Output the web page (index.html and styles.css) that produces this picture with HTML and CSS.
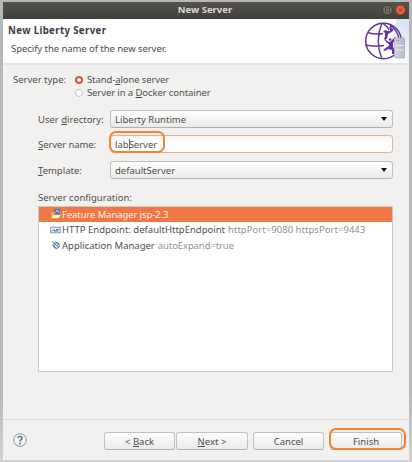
FILE: index.html
```html
<!DOCTYPE html>
<html lang="en">
<head>
<meta charset="utf-8">
<title>New Server</title>
<link rel="stylesheet" href="styles.css">
</head>
<body>
<div class="window">
  <div class="titlebar">
    <span class="title">New Server</span>
    <svg class="controls" width="26" height="16" viewBox="0 0 26 16">
      <circle cx="7.500" cy="8" r="4.800" fill="#77736a" stroke="#393832" stroke-width=".8"/>
      <rect x="5.500" y="6" width="4" height="4" fill="none" stroke="#45433e" stroke-width=".9"/>
      <circle cx="20.500" cy="8" r="5" fill="#ed6037" stroke="#3c2b22" stroke-width=".6"/>
      <path d="M19 6.500l3 3M22 6.500l-3 3" stroke="#8a3c22" stroke-width="1"/>
    </svg>
  </div>
  <header class="banner">
    <div class="heading">
      <h1>New Liberty Server</h1>
      <p>Specify the name of the new server.</p>
    </div>
    <svg class="logo" width="50" height="44" viewBox="0 0 50 44">
      <defs><linearGradient id="sky" x1="0" y1="1" x2="1" y2="0"><stop offset=".35" stop-color="#fff"/><stop offset="1" stop-color="#d3dff5"/></linearGradient>
      <linearGradient id="tower" x1="0" x2="1"><stop offset="0" stop-color="#d3d6e0"/><stop offset="1" stop-color="#b3b7c4"/></linearGradient></defs>
      <path d="M50 0H37Q38 26 6 44H50z" fill="url(#sky)"/>
      <g fill="none" stroke="#6334a0" stroke-width="1.5">
        <circle cx="24.500" cy="22" r="17.800"/>
        <path d="M23 4Q15.500 22 23 40M9 13.500Q16 16 24 14.500M6.500 26Q15 28 25 26.500M31 6Q39 12 40 20M24 4.500Q29 8 30 11"/>
      </g>
      <path d="M24 12l3-1 1 1h3v-2l-1-2 2-1 1 3 2-1-1 3-3 2-2 1-1 5h-2v-6z" fill="#6334a0"/>
      <path d="M25 18q3 5 6 5l5-5 1 1-3 5v4l2 4-1 3h-2v-4l-4-1-3 2-2-1 4-3 2-1v-2q-4-2-5-6z" fill="#6334a0"/>
      <circle cx="31" cy="20.500" r="1.300" fill="#6334a0"/>
      <path d="M35.500 19h10v20h-9l-1-1z" fill="url(#tower)" stroke="#a7abb9" stroke-width=".7"/>
      <path d="M36.500 26.500h8M36.500 31h8" stroke="#eef0f5" stroke-width="1"/>
      <path d="M37 21.500h3" stroke="#66c776" stroke-width="1.300"/>
    </svg>
  </header>
  <main class="content">
    <div class="type-row">
      <span class="type-label">Server type:</span>
      <div class="radios">
        <label><i class="radio on"></i><span class="tight">Stand-<u>a</u>lone server</span></label>
        <label><i class="radio"></i><span class="tight">Server in a <u>D</u>ocker container</span></label>
      </div>
    </div>
    <div class="form">
      <span class="label">User <u>d</u>irectory:</span>
      <div class="field combo"><span>Liberty Runtime</span><i class="arrow"></i></div>
      <span class="label tight"><u>S</u>erver name:</span>
      <div class="field entry"><span>lab<i class="caret"></i>Server</span><i class="mark mark-name"></i></div>
      <span class="label"><u>T</u>emplate:</span>
      <div class="field combo"><span>defaultServer</span><i class="arrow"></i></div>
    </div>
    <div class="list-label">Server configuration:</div>
    <div class="list">
      <div class="item selected">
        <svg width="12" height="12" viewBox="0 0 12 12"><path d="M1 4h3l1 1h5v5H1z" fill="#e7bd59" stroke="#b98535" stroke-width=".5"/><path d="M1 10.500l2-4h8l-2 4z" fill="#fff0a9" stroke="#c29143" stroke-width=".5"/><rect x="4.500" y="1" width="5.500" height="5.500" fill="#4474b9"/><path d="M5.500 4.500l2-2.500L9 4.500" stroke="#e7f1ff" fill="none"/></svg>
        <span class="tight">Feature Manager jsp-2.3</span>
      </div>
      <div class="item">
        <svg width="12" height="12" viewBox="0 0 12 12"><rect x=".8" y="3.200" width="9.400" height="5.600" fill="#e5eef7" stroke="#6d8eaf" stroke-width=".9"/><path d="M2 7.500l2-2 1 2 2-2.500v2.500l2-3" fill="none" stroke="#416b98" stroke-width=".9"/></svg>
        <span>HTTP Endpoint: defaultHttpEndpoint</span><span class="detail ports">httpPort=9080 httpsPort=9443</span>
      </div>
      <div class="item">
        <svg width="12" height="12" viewBox="0 0 12 12"><circle cx="6.500" cy="6.500" r="2.900" fill="#d4e4ef" stroke="#5a86a6"/><path d="M2 2.500l7 6M2 5.500l4 4M5.500 2.500l4 3.500" stroke="#456b87" stroke-width=".9"/></svg>
        <span>Application Manager</span><span class="detail tight">autoExpand=true</span>
      </div>
    </div>
  </main>
  <footer class="footer">
    <svg class="help" width="14" height="14" viewBox="0 0 14 14"><circle cx="7" cy="7" r="6.300" fill="#f5f7fb" stroke="#75859f" stroke-width=".9"/><path d="M4.800 5.200Q5 3.400 7 3.400Q9.200 3.500 9 5.300Q8.900 6.200 7.700 6.900Q7 7.400 7 8.500" fill="none" stroke="#516584" stroke-width="1.400"/><circle cx="7" cy="10.400" r=".9" fill="#516584"/></svg>
    <div class="button back">&lt; <u>B</u>ack</div>
    <div class="button next"><u>N</u>ext &gt;</div>
    <div class="button cancel">Cancel</div>
    <div class="button finish">Finish<i class="mark mark-finish"></i></div>
  </footer>
</div>
</body>
</html>
```

FILE: styles.css
```css
* { box-sizing: border-box; }
body { margin: 0; height: 462px; overflow: hidden; padding: 2px 3px 2px 3px; background: linear-gradient(#b5b8b6 0, #b5b8b6 85%, #d2d3d2); font: 9.5px/12px "Noto Sans", sans-serif; color: #4f4f4f; }
.window { height: 458px; background: #f2f1ef; display: flex; flex-direction: column; }
.titlebar { height: 17px; flex: none; display: grid; grid-template-columns: 1fr auto 1fr; align-items: center; background: linear-gradient(#55534c, #403f3a); color: #dfdbd2; font-weight: 700; }
.title { grid-column: 2; line-height: 14px; margin: 0 2px 2px 0; }
.controls { justify-self: end; margin-right: 3px; margin-bottom: 1px; }
.banner { height: 44px; flex: none; display: flex; justify-content: space-between; background: #fff; color: #4c4c4c; }
.heading { padding: 6px 0 0 5px; }
h1 { margin: 0; font-size: 9.7px; line-height: 12px; font-weight: 700; letter-spacing: .34px; color: #3c3c3c; }
p { margin: 6px 0 0 3px; letter-spacing: -.06px; }
.content { flex: 1; border-top: 2px solid #e6e5e3; padding: 8px 16px 0 10px; }
.type-row { display: flex; }
.type-label { width: 62px; padding-top: 1px; white-space: nowrap; }
.radios label { display: flex; align-items: center; height: 13px; white-space: nowrap; }
.radio { width: 8px; height: 8px; margin: 0 4px 0 0; border-radius: 50%; background: #fff; border: 1px solid #c9c7c4; }
.radio.on { border: 2.5px solid #cf5a36; }
.tight { letter-spacing: -.1px; }
u { text-decoration-thickness: 1px; text-underline-offset: 1px; }
.form { display: grid; grid-template-columns: 72px 1fr; grid-template-rows: repeat(3, 18px); row-gap: 7.3px; margin: 11px 0 0 25px; align-items: center; white-space: nowrap; }
.label { padding-top: 2px; }
.field { position: relative; height: 18px; display: flex; align-items: center; justify-content: space-between; padding: 0 5px 0 4px; border: 1px solid #c2c0bd; border-radius: 3px; }
.field > span { padding-top: 2px; }
.combo { background: linear-gradient(#fff, #eaeae8); border-bottom-color: #b3b1ae; }
.entry { border-color: #efac94; background: linear-gradient(#f5f5f5, #fff 40%); }
.arrow { border: 3px solid transparent; border-top: 4px solid #111; border-bottom: 0; }
.caret { display: inline-block; width: 1px; height: 11px; margin-right: -1px; vertical-align: -2px; background: #777; }
.mark { position: absolute; border: 2px solid #fb812a; border-radius: 7px; }
.mark-name { left: -2px; top: -5px; width: 56px; height: 22px; }
.list-label { margin: 13px 0 0 25px; }
.list { margin: 2px 0 0 25px; height: 166px; border: 1px solid #cbc9c6; background: #fff; }
.item { display: flex; align-items: center; height: 15.5px; padding-left: 11px; white-space: nowrap; }
.item > span { padding-top: 1px; }
.item svg { flex: none; }
.selected { background: #f07746; color: #fff1e8; }
.detail { margin-left: 3px; color: #929292; }
.ports { letter-spacing: .04px; }
.footer { height: 41px; flex: none; display: flex; align-items: flex-start; border-top: 1px solid #dddcda; padding: 12px 0 0 10px; }
.help { flex: none; margin: 1px 77px 0 0; }
.button { position: relative; flex: none; width: 71px; height: 18px; padding-top: 1px; display: flex; align-items: center; justify-content: center; white-space: pre; border: 1px solid #c3c1be; border-bottom-color: #b0aeab; border-radius: 3px; background: linear-gradient(#fdfdfd, #ebebe9); }
.next { margin-left: 1px; width: 72px; }
.cancel { margin-left: 5px; }
.finish { margin-left: 6px; width: 72px; }
.mark-finish { left: -2px; top: -5px; width: 77px; height: 22px; }
```
